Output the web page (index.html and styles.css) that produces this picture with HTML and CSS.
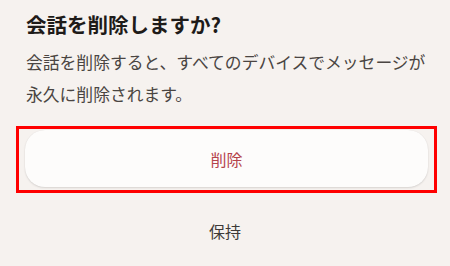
FILE: index.html
```html
<!DOCTYPE html>
<html lang="ja">
<head>
<meta charset="utf-8">
<link rel="stylesheet" href="styles.css">
</head>
<body>
<div class="dialog">
  <h1 class="title">会話を削除しますか?</h1>
  <p class="message">会話を削除すると、すべてのデバイスでメッセージが永久に削除されます。</p>
  <div class="highlight">
    <button class="btn btn-delete">削除</button>
  </div>
  <button class="btn btn-keep">保持</button>
</div>
</body>
</html>
```

FILE: styles.css
```css
html, body {
  margin: 0;
  padding: 0;
  background: #f6f2ef;
  font-family: "Noto Sans CJK JP", "Noto Sans", sans-serif;
}
.dialog {
  width: 450px;
  height: 266px;
  box-sizing: border-box;
  padding-top: 10px;
  display: flex;
  flex-direction: column;
}
.title {
  margin: 0 26px;
  font-size: 20.5px;
  line-height: 28px;
  font-weight: 700;
  color: #1e1b19;
}
.message {
  margin: 9px 12px 0 26px;
  font-size: 16.8px;
  line-height: 31.5px;
  color: #4a4542;
}
.highlight {
  margin: 16px 13px 0 16px;
  border: 3px solid #ff0000;
  padding: 1px 6px 3px 6px;
}
.btn {
  display: block;
  width: 100%;
  border: none;
  font-family: inherit;
  font-size: 16px;
  background: transparent;
  padding: 0;
}
.btn-delete {
  height: 57px;
  border-radius: 20px;
  background: #fdfcfb;
  color: #b5434b;
  box-shadow: 0 1px 2px rgba(0, 0, 0, 0.12), 0 0 1px rgba(0, 0, 0, 0.08);
}
.btn-keep {
  margin-top: 10px;
  height: 56px;
  color: #3e3a38;
}
```
